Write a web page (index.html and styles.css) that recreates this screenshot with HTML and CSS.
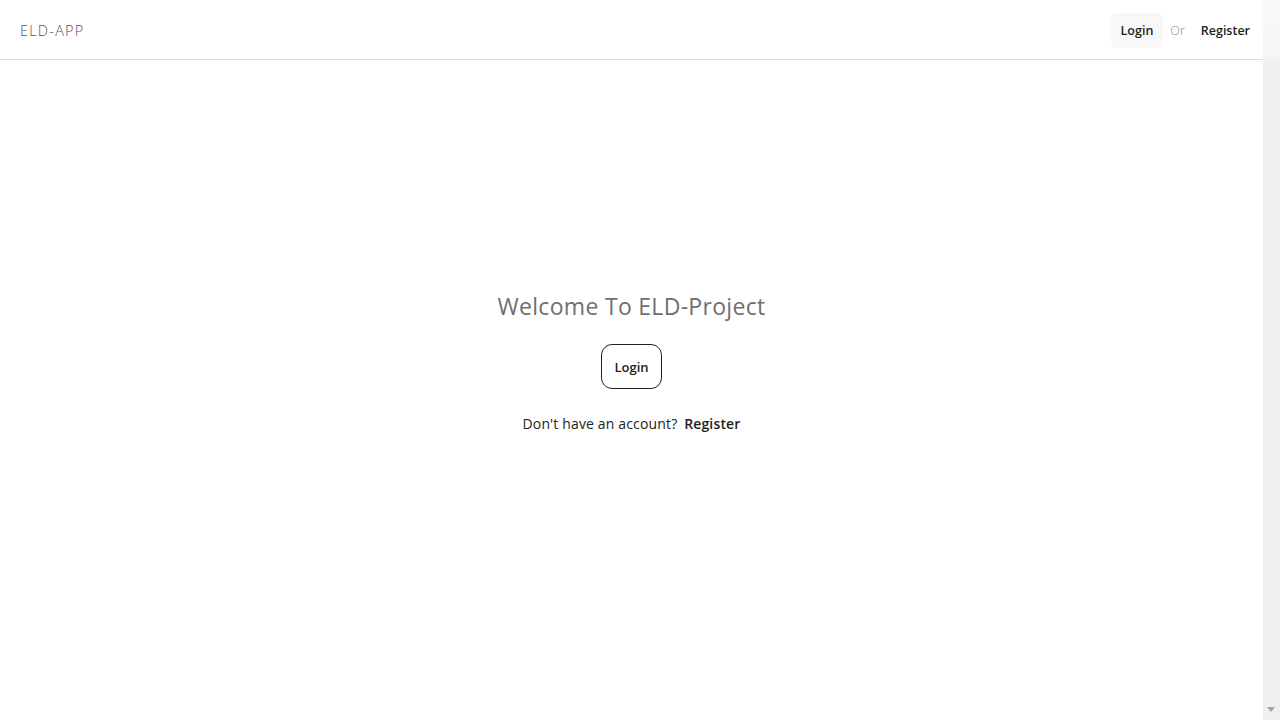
FILE: index.html
```html
<!DOCTYPE html>
<html>
<head>
<meta charset="utf-8">
<link rel="stylesheet" href="styles.css">
</head>
<body>
<div class="page">
  <header class="navbar">
    <div class="brand">ELD-APP</div>
    <nav class="nav">
      <a class="nav-link active">Login</a>
      <span class="or">Or</span>
      <a class="nav-link">Register</a>
    </nav>
  </header>
  <main class="hero">
    <h1 class="title">Welcome To ELD-Project</h1>
    <button class="btn-login">Login</button>
    <p class="signup">Don't have an account? <a class="signup-link">Register</a></p>
  </main>
</div>
<div class="scrollbar"><span class="scroll-arrow"></span></div>
</body>
</html>
```
FILE: styles.css
```css
* { box-sizing: border-box; }
body {
  margin: 0;
  font-family: "Open Sans", "Noto Sans", sans-serif;
  color: #212529;
  background: #fff;
}
.page {
  margin-right: 17px;
}
.scrollbar {
  position: fixed;
  top: 0;
  right: 0;
  bottom: 0;
  width: 17px;
  background: linear-gradient(to bottom, #fafafa 0, #f5f5f5 60px, #f0f0f0 61px, #f0f0f0 100%);
}
.scroll-arrow {
  position: absolute;
  left: 4px;
  bottom: 8px;
  width: 0;
  height: 0;
  border-left: 4px solid transparent;
  border-right: 4px solid transparent;
  border-top: 5px solid #a3a3a3;
}
.navbar {
  height: 60px;
  border-bottom: 1px solid #dcdcdc;
  display: flex;
  align-items: center;
  justify-content: space-between;
  padding: 2px 3px 0 20px;
}
.brand {
  font-size: 14.5px;
  font-weight: 300;
  letter-spacing: 1.2px;
  color: #555;
}
.nav {
  display: flex;
  align-items: center;
  gap: 6px;
}
.nav-link {
  font-size: 12.5px;
  font-weight: 600;
  color: #222;
  padding: 9px 10px;
  border-radius: 5px;
  line-height: 17px;
}
.nav-link.active { background: #f8f8f8; margin-right: 1px; }
.or {
  font-size: 12.5px;
  color: #888;
  font-weight: 300;
}
.hero {
  display: flex;
  flex-direction: column;
  align-items: center;
  padding-top: 230px;
}
.title {
  margin: 0;
  font-size: 23px;
  font-weight: 400;
  color: #707070;
  letter-spacing: 0.3px;
}
.btn-login {
  margin-top: 22px;
  width: 61px;
  height: 45px;
  border: 1px solid #222;
  border-radius: 11px;
  background: #fff;
  font-family: inherit;
  font-size: 13px;
  font-weight: 600;
  color: #222;
}
.signup {
  margin: 25px 0 0;
  font-size: 14px;
  color: #222;
  letter-spacing: 0.15px;
}
.signup-link {
  font-weight: 600;
  margin-left: 3px;
}
```
